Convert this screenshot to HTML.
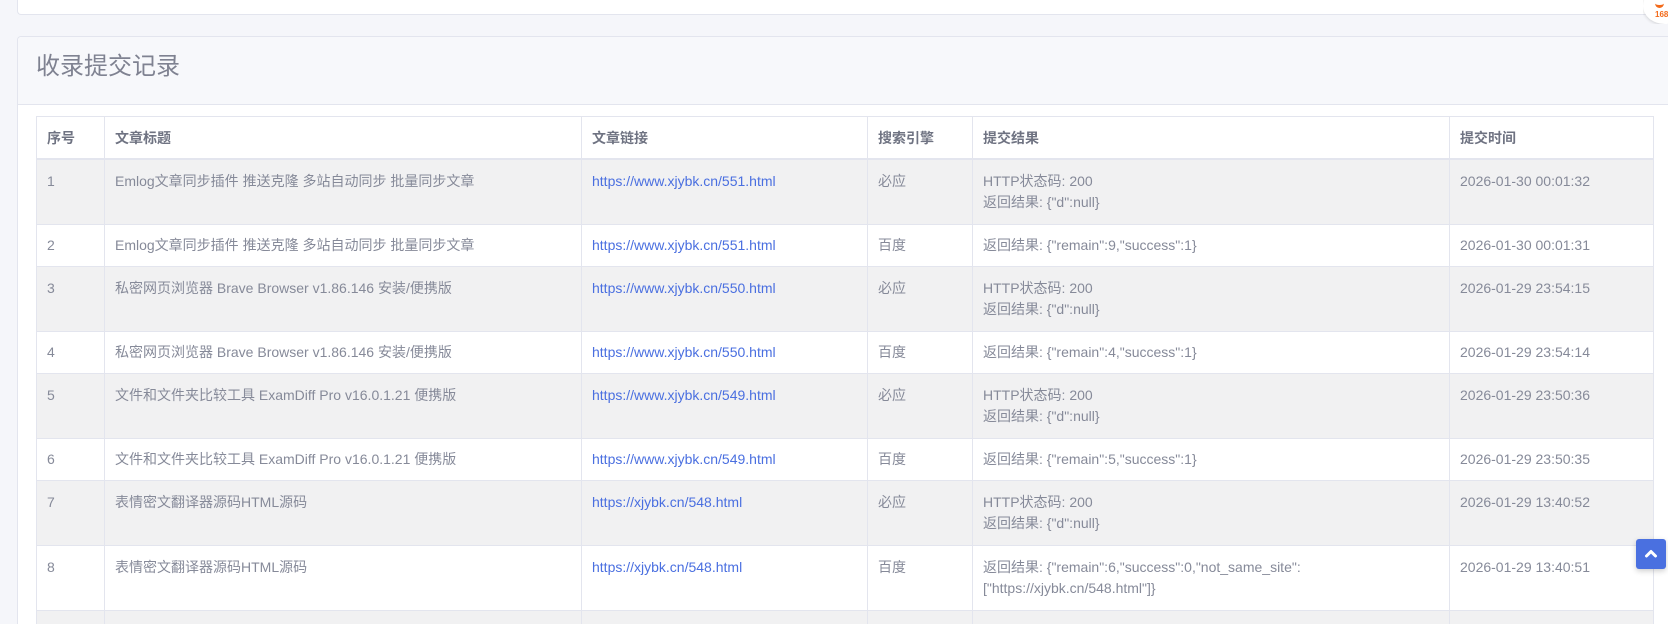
<!DOCTYPE html>
<html><head><meta charset="utf-8"><style>
html,body{margin:0;padding:0;width:1668px;height:624px;overflow:hidden;background:#f5f6fa;font-family:"Liberation Sans","Noto Sans CJK SC",sans-serif;}
.c1{position:absolute;left:17px;top:-10px;width:1650px;height:23px;background:#fff;border:1px solid #e3e5ee;border-right:none;border-radius:4px 0 0 4px;}
.c2{position:absolute;left:17px;top:36px;width:1651px;height:587px;background:#fff;border:1px solid #e3e5ee;border-bottom:none;border-right:none;border-radius:4px 0 0 0;overflow:hidden;}
.hd{height:67px;background:#f7f8fb;border-bottom:1px solid #e3e5ee;border-radius:4px 0 0 0;}
.hd h2{margin:0;padding:10px 0 0 18px;font-size:24px;font-weight:normal;color:#7f8291;line-height:40px;}
table{position:absolute;left:18px;top:79px;border-collapse:collapse;font-size:14px;color:#868a99;}
td,th{border:1px solid #e3e5ee;vertical-align:top;text-align:left;padding:11px 10px 11px;line-height:21px;}
th{font-weight:bold;color:#6f7382;padding:11px 10px 9px;height:21px;border-bottom:2px solid #e3e5ee;}
tr.g td{background:#f1f1f2;}
td{height:42px;}
tr.s td{height:19px;padding-top:10px;padding-bottom:10px;}
a{color:#4a6fe0;text-decoration:none;}
.top{position:absolute;left:1636px;top:539px;width:30px;height:30px;background:#4a70e0;border-radius:3px;box-shadow:0 2px 6px rgba(0,0,0,.2);}
.badge{position:absolute;left:1643px;top:-12px;width:25px;height:36px;overflow:hidden;}
.badge i{position:absolute;left:0;top:0;width:44px;height:36px;background:#fff;border-radius:50%;box-shadow:0 1px 3px rgba(0,0,0,.15);}
</style></head><body>
<div class="c1"></div>
<div class="badge"><i></i><span style="position:absolute;left:12px;top:22px;color:#f36a1a;font-size:8px;font-weight:bold">168</span><span style="position:absolute;left:12px;top:12px;width:9px;height:5px;border-bottom:3px solid #f36a1a;border-radius:0 0 6px 6px"></span></div>
<div class="c2"><div class="hd"><h2>收录提交记录</h2></div>
<table>
<tr><th style="width:47px">序号</th><th style="width:456px">文章标题</th><th style="width:265px">文章链接</th><th style="width:84px">搜索引擎</th><th style="width:456px">提交结果</th><th style="width:183px">提交时间</th></tr>
<tr class="g"><td>1</td><td>Emlog文章同步插件 推送克隆 多站自动同步 批量同步文章</td><td><a>https://www.xjybk.cn/551.html</a></td><td>必应</td><td>HTTP状态码: 200<br>返回结果: {"d":null}</td><td>2026-01-30 00:01:32</td></tr>
<tr class="s"><td>2</td><td>Emlog文章同步插件 推送克隆 多站自动同步 批量同步文章</td><td><a>https://www.xjybk.cn/551.html</a></td><td>百度</td><td>返回结果: {"remain":9,"success":1}</td><td>2026-01-30 00:01:31</td></tr>
<tr class="g"><td>3</td><td>私密网页浏览器 Brave Browser v1.86.146 安装/便携版</td><td><a>https://www.xjybk.cn/550.html</a></td><td>必应</td><td>HTTP状态码: 200<br>返回结果: {"d":null}</td><td>2026-01-29 23:54:15</td></tr>
<tr class="s"><td>4</td><td>私密网页浏览器 Brave Browser v1.86.146 安装/便携版</td><td><a>https://www.xjybk.cn/550.html</a></td><td>百度</td><td>返回结果: {"remain":4,"success":1}</td><td>2026-01-29 23:54:14</td></tr>
<tr class="g"><td>5</td><td>文件和文件夹比较工具 ExamDiff Pro v16.0.1.21 便携版</td><td><a>https://www.xjybk.cn/549.html</a></td><td>必应</td><td>HTTP状态码: 200<br>返回结果: {"d":null}</td><td>2026-01-29 23:50:36</td></tr>
<tr class="s"><td>6</td><td>文件和文件夹比较工具 ExamDiff Pro v16.0.1.21 便携版</td><td><a>https://www.xjybk.cn/549.html</a></td><td>百度</td><td>返回结果: {"remain":5,"success":1}</td><td>2026-01-29 23:50:35</td></tr>
<tr class="g"><td>7</td><td>表情密文翻译器源码HTML源码</td><td><a>https://xjybk.cn/548.html</a></td><td>必应</td><td>HTTP状态码: 200<br>返回结果: {"d":null}</td><td>2026-01-29 13:40:52</td></tr>
<tr><td>8</td><td>表情密文翻译器源码HTML源码</td><td><a>https://xjybk.cn/548.html</a></td><td>百度</td><td>返回结果: {"remain":6,"success":0,"not_same_site":<br>["https://xjybk.cn/548.html"]}</td><td>2026-01-29 13:40:51</td></tr>
<tr class="g"><td>&nbsp;</td><td></td><td></td><td></td><td></td><td></td></tr>
</table></div>
<div class="top"><svg width="30" height="30" viewBox="0 0 30 30"><path d="M10.5 17 L15 12.5 L19.5 17" stroke="#fff" stroke-width="3" fill="none" stroke-linecap="round" stroke-linejoin="round"/></svg></div>
</body></html>
